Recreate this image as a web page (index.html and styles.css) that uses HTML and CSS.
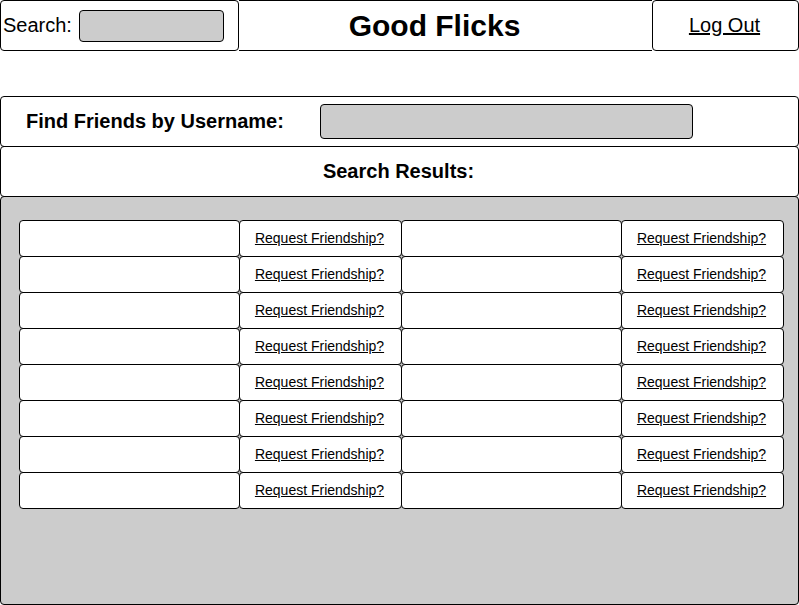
FILE: index.html
```html
<!DOCTYPE html>
<html>
<head>
<meta charset="utf-8">
<link rel="stylesheet" href="styles.css">
</head>
<body>
<header class="topbar">
  <div class="search-box">
    <span class="search-label">Search:</span>
    <div class="field field-small"></div>
  </div>
  <div class="brand">Good Flicks</div>
  <div class="logout-box"><a class="logout" href="#">Log Out</a></div>
</header>

<main class="panel">
  <div class="find-row">
    <span class="find-label">Find Friends by Username:</span>
    <div class="field field-wide"></div>
  </div>
  <div class="results-head">Search Results:</div>
  <div class="results-area">
    <div class="grid">
      <div class="cell"></div><div class="cell req"><a href="#">Request Friendship?</a></div><div class="cell"></div><div class="cell req"><a href="#">Request Friendship?</a></div>
      <div class="cell"></div><div class="cell req"><a href="#">Request Friendship?</a></div><div class="cell"></div><div class="cell req"><a href="#">Request Friendship?</a></div>
      <div class="cell"></div><div class="cell req"><a href="#">Request Friendship?</a></div><div class="cell"></div><div class="cell req"><a href="#">Request Friendship?</a></div>
      <div class="cell"></div><div class="cell req"><a href="#">Request Friendship?</a></div><div class="cell"></div><div class="cell req"><a href="#">Request Friendship?</a></div>
      <div class="cell"></div><div class="cell req"><a href="#">Request Friendship?</a></div><div class="cell"></div><div class="cell req"><a href="#">Request Friendship?</a></div>
      <div class="cell"></div><div class="cell req"><a href="#">Request Friendship?</a></div><div class="cell"></div><div class="cell req"><a href="#">Request Friendship?</a></div>
      <div class="cell"></div><div class="cell req"><a href="#">Request Friendship?</a></div><div class="cell"></div><div class="cell req"><a href="#">Request Friendship?</a></div>
      <div class="cell"></div><div class="cell req"><a href="#">Request Friendship?</a></div><div class="cell"></div><div class="cell req"><a href="#">Request Friendship?</a></div>
    </div>
  </div>
</main>
</body>
</html>
```

FILE: styles.css
```css
* { box-sizing: border-box; }
html, body {
  margin: 0;
  padding: 0;
  background: #fff;
  font-family: "Liberation Sans", Arial, sans-serif;
  color: #000;
}
body { width: 799px; height: 605px; overflow: hidden; }

.topbar {
  display: flex;
  height: 51px;
}
.search-box {
  width: 239px;
  border: 1px solid #000;
  border-radius: 4px;
  display: flex;
  align-items: center;
  padding-left: 2px;
}
.search-label {
  font-size: 20px;
  margin-right: 7px;
}
.field {
  background: #ccc;
  border: 1px solid #000;
  border-radius: 4px;
}
.field-small {
  width: 145px;
  height: 32px;
}
.brand {
  flex: 1;
  border-top: 1px solid #000;
  border-bottom: 1px solid #000;
  display: flex;
  align-items: center;
  justify-content: center;
  font-size: 30px;
  font-weight: bold;
  padding-right: 22px;
}
.logout-box {
  width: 147px;
  border: 1px solid #000;
  border-radius: 4px;
  display: flex;
  align-items: center;
  justify-content: center;
  padding-right: 2px;
}
.logout, .req a {
  color: #000;
  text-decoration: underline;
}
.logout { font-size: 20px; }

.panel {
  margin-top: 45px;
  width: 799px;
}
.find-row {
  height: 51px;
  border: 1px solid #000;
  border-radius: 4px;
  display: flex;
  align-items: center;
  padding-left: 25px;
}
.find-label {
  font-size: 20px;
  font-weight: bold;
  width: 294px;
}
.field-wide {
  width: 373px;
  height: 35px;
}
.results-head {
  height: 51px;
  margin-top: -1px;
  border: 1px solid #000;
  border-radius: 4px;
  display: flex;
  align-items: center;
  justify-content: center;
  font-size: 20px;
  font-weight: bold;
  padding-right: 2px;
}
.results-area {
  height: 409px;
  margin-top: -1px;
  background: #ccc;
  border: 1px solid #000;
  border-radius: 4px;
  padding: 23px 0 0 18px;
}
.grid {
  display: grid;
  grid-template-columns: 220px 162px 220px 162px;
  grid-auto-rows: 36px;
}
.cell {
  background: #fff;
  border: 1px solid #000;
  border-radius: 4px;
  margin-right: -1px;
  margin-bottom: -1px;
}
.req {
  display: flex;
  align-items: center;
  justify-content: center;
  font-size: 14px;
  padding-right: 2px;
  padding-bottom: 2px;
}
```
